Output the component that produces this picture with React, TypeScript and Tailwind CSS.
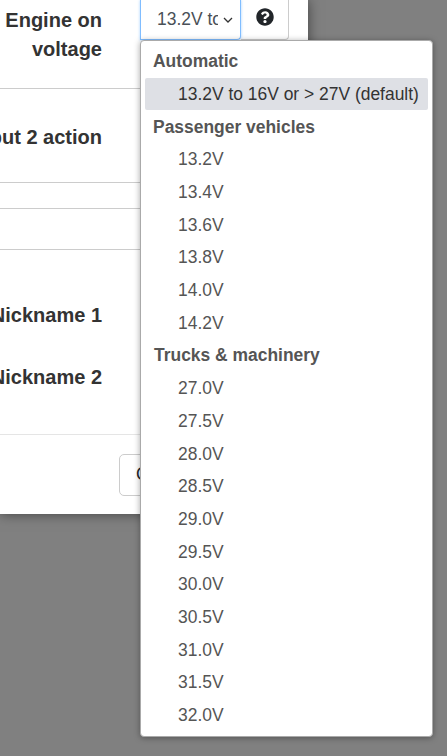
import { FaQuestionCircle } from "react-icons/fa";

const groups = [
  { label: "Automatic", labelClass: "pl-[12px]", items: ["13.2V to 16V or > 27V (default)"] },
  { label: "Passenger vehicles", labelClass: "pl-[12px]", items: ["13.2V", "13.4V", "13.6V", "13.8V", "14.0V", "14.2V"] },
  {
    label: "Trucks & machinery",
    labelClass: "pl-[13px]",
    items: ["27.0V", "27.5V", "28.0V", "28.5V", "29.0V", "29.5V", "30.0V", "30.5V", "31.0V", "31.5V", "32.0V"],
  },
];

function Label({ children }: { children: React.ReactNode }) {
  return (
    <div className="flex w-[102px] shrink-0 justify-end whitespace-nowrap text-[20px] leading-[29px] font-bold text-[#333]">
      {children}
    </div>
  );
}

export default function App() {
  return (
    <div className="relative h-[756px] w-[447px] overflow-hidden bg-[#808080] font-['Liberation_Sans',Arial,sans-serif]">
      <div className="flex h-[514px] w-[308px] flex-col bg-white shadow-[0_0_12px_rgba(0,0,0,0.5)]">
        <div className="flex h-[89px] shrink-0 items-start border-b border-[#ccc] pt-[6px]">
          <div className="w-[102px] shrink-0 text-right text-[20px] leading-[29px] font-bold text-[#333]">
            Engine on voltage
          </div>
          <div className="ml-[38px] mt-[-6px] flex h-[40px] items-center">
            <div className="flex h-full w-[101px] items-center rounded-br-[4px] border border-t-0 border-[#80bdff] pl-[16px] shadow-[0_0_3px_rgba(128,189,255,0.7)]">
              <span className="w-[61px] overflow-hidden whitespace-nowrap text-[17.45px] text-[#495057]">13.2V to 16V</span>
              <svg className="ml-[5px] h-[8px] w-[10px] text-[#333]" viewBox="0 0 10 8" fill="none" stroke="currentColor" strokeWidth="1.3">
                <path d="M1 2l4 4 4-4" />
              </svg>
            </div>
            <div className="flex h-full w-[48px] items-center justify-center rounded-br-[4px] border border-t-0 border-l-0 border-[#ccc] text-[#212529]">
              <FaQuestionCircle className="mb-[6px] text-[18px]" />
            </div>
          </div>
        </div>
        <div className="flex h-[94px] shrink-0 items-start border-b border-[#ccc] pt-[34px]">
          <Label>Output 2 action</Label>
        </div>
        <div className="h-[26px] shrink-0 border-b border-[#ccc]" />
        <div className="h-[41px] shrink-0 border-b border-[#ccc]" />
        <div className="flex h-[185px] shrink-0 flex-col gap-[33px] border-b border-[#e5e5e5] pt-[51px]">
          <Label>Nickname 1</Label>
          <Label>Nickname 2</Label>
        </div>
        <div className="flex flex-1 items-center pl-[119px]">
          <div className="flex h-[42px] w-[100px] items-center rounded-[5px] border border-[#ccc] pl-[16px] text-[17.45px] text-[#212529]">
            Close
          </div>
        </div>
      </div>

      <div className="absolute top-[40px] left-[140px] flex h-[697px] w-[293px] flex-col rounded-[4px] border border-[#aaa] bg-white pt-[4px] shadow-[0_1px_6px_rgba(0,0,0,0.35)]">
        {groups.map((group) => (
          <div key={group.label}>
            <div className={`flex h-[32.7px] items-center text-[17.45px] font-bold text-[#555] ${group.labelClass}`}>
              {group.label}
            </div>
            {group.items.map((item, idx) => (
              <div
                key={item}
                className={`mx-[4px] flex h-[32.7px] items-center whitespace-nowrap rounded-[2px] pl-[33px] text-[17.45px] ${
                  group.label === "Automatic" && idx === 0 ? "bg-[#dee0e5] text-[#333]" : "text-[#555]"
                }`}
              >
                {item}
              </div>
            ))}
          </div>
        ))}
      </div>
    </div>
  );
}
